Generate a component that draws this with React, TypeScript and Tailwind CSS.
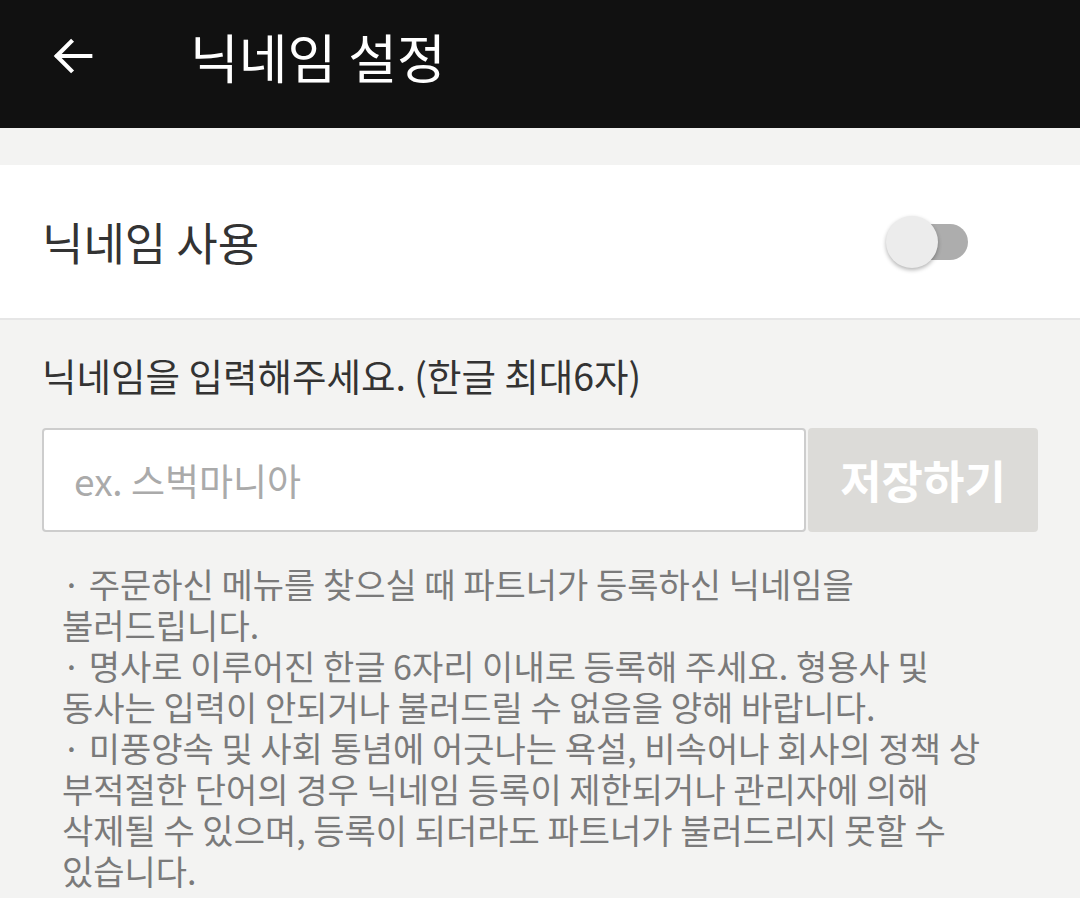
import { useState } from "react";

const notes = [
  "· 주문하신 메뉴를 찾으실 때 파트너가 등록하신 닉네임을",
  "불러드립니다.",
  "· 명사로 이루어진 한글 6자리 이내로 등록해 주세요. 형용사 및",
  "동사는 입력이 안되거나 불러드릴 수 없음을 양해 바랍니다.",
  "· 미풍양속 및 사회 통념에 어긋나는 욕설, 비속어나 회사의 정책 상",
  "부적절한 단어의 경우 닉네임 등록이 제한되거나 관리자에 의해",
  "삭제될 수 있으며, 등록이 되더라도 파트너가 불러드리지 못할 수",
  "있습니다.",
];

export default function App() {
  const [enabled, setEnabled] = useState(false);
  const [nickname, setNickname] = useState("");

  return (
    <div
      className="w-[1080px] h-[898px] overflow-hidden bg-[#f3f3f2]"
      style={{ fontFamily: '"Noto Sans CJK KR", "Noto Sans", sans-serif' }}
    >
      {/* HEADER */}
      <header className="h-[128px] bg-[#111111] flex items-center pb-[16px]">
        <button className="w-[150px] pl-[50px] text-white">
          <svg width="46" height="46" viewBox="0 0 24 24" fill="none" stroke="currentColor" strokeWidth="2.2" strokeLinecap="square">
            <path d="M21 12H4" />
            <path d="M11 4.5L3.5 12L11 19.5" />
          </svg>
        </button>
        <h1 className="ml-[40px] text-[53px] text-white leading-none">닉네임 설정</h1>
      </header>

      <div className="h-[37px]" />

      {/* TOGGLE ROW */}
      <div className="h-[155px] bg-white border-b-2 border-[#e6e6e6] flex items-center justify-between pl-[42px] pr-[112px]">
        <span className="text-[45px] text-[#333333] leading-none">닉네임 사용</span>
        <button onClick={() => setEnabled(!enabled)} className="relative w-[82px] h-[54px] flex items-center">
          <span className={`absolute left-[19px] w-[63px] h-[36px] rounded-full ${enabled ? "bg-[#8fc9a8]" : "bg-[#adadad]"}`} />
          <span
            className={`absolute ${enabled ? "left-[30px]" : "left-0"} w-[52px] h-[52px] rounded-full bg-[#ececec] shadow-[0_2px_4px_rgba(0,0,0,0.3)]`}
          />
        </button>
      </div>

      {/* INPUT SECTION */}
      <div className="px-[42px] pt-[36px]">
        <p className="text-[37.5px] text-[#333333] leading-none">닉네임을 입력해주세요. (한글 최대6자)</p>
        <div className="flex mt-[34px] h-[104px]">
          <input
            value={nickname}
            onChange={(e) => setNickname(e.target.value)}
            placeholder="ex. 스벅마니아"
            className="w-[764px] h-full bg-white border-2 border-[#cdcdcd] rounded-[4px] pl-[30px] text-[37px] text-[#333] placeholder:text-[#aaaaaa] outline-none"
          />
          <button className="ml-[2px] w-[230px] h-full bg-[#dcdbd8] rounded-[4px] text-white text-[45px] font-bold">
            저장하기
          </button>
        </div>

        <div className="mt-[31px] pl-[20px] text-[34px] text-[#7a7a7a] leading-[41px]">
          {notes.map((line, i) => (
            <p key={i} className="whitespace-nowrap">{line}</p>
          ))}
        </div>
      </div>
    </div>
  );
}
